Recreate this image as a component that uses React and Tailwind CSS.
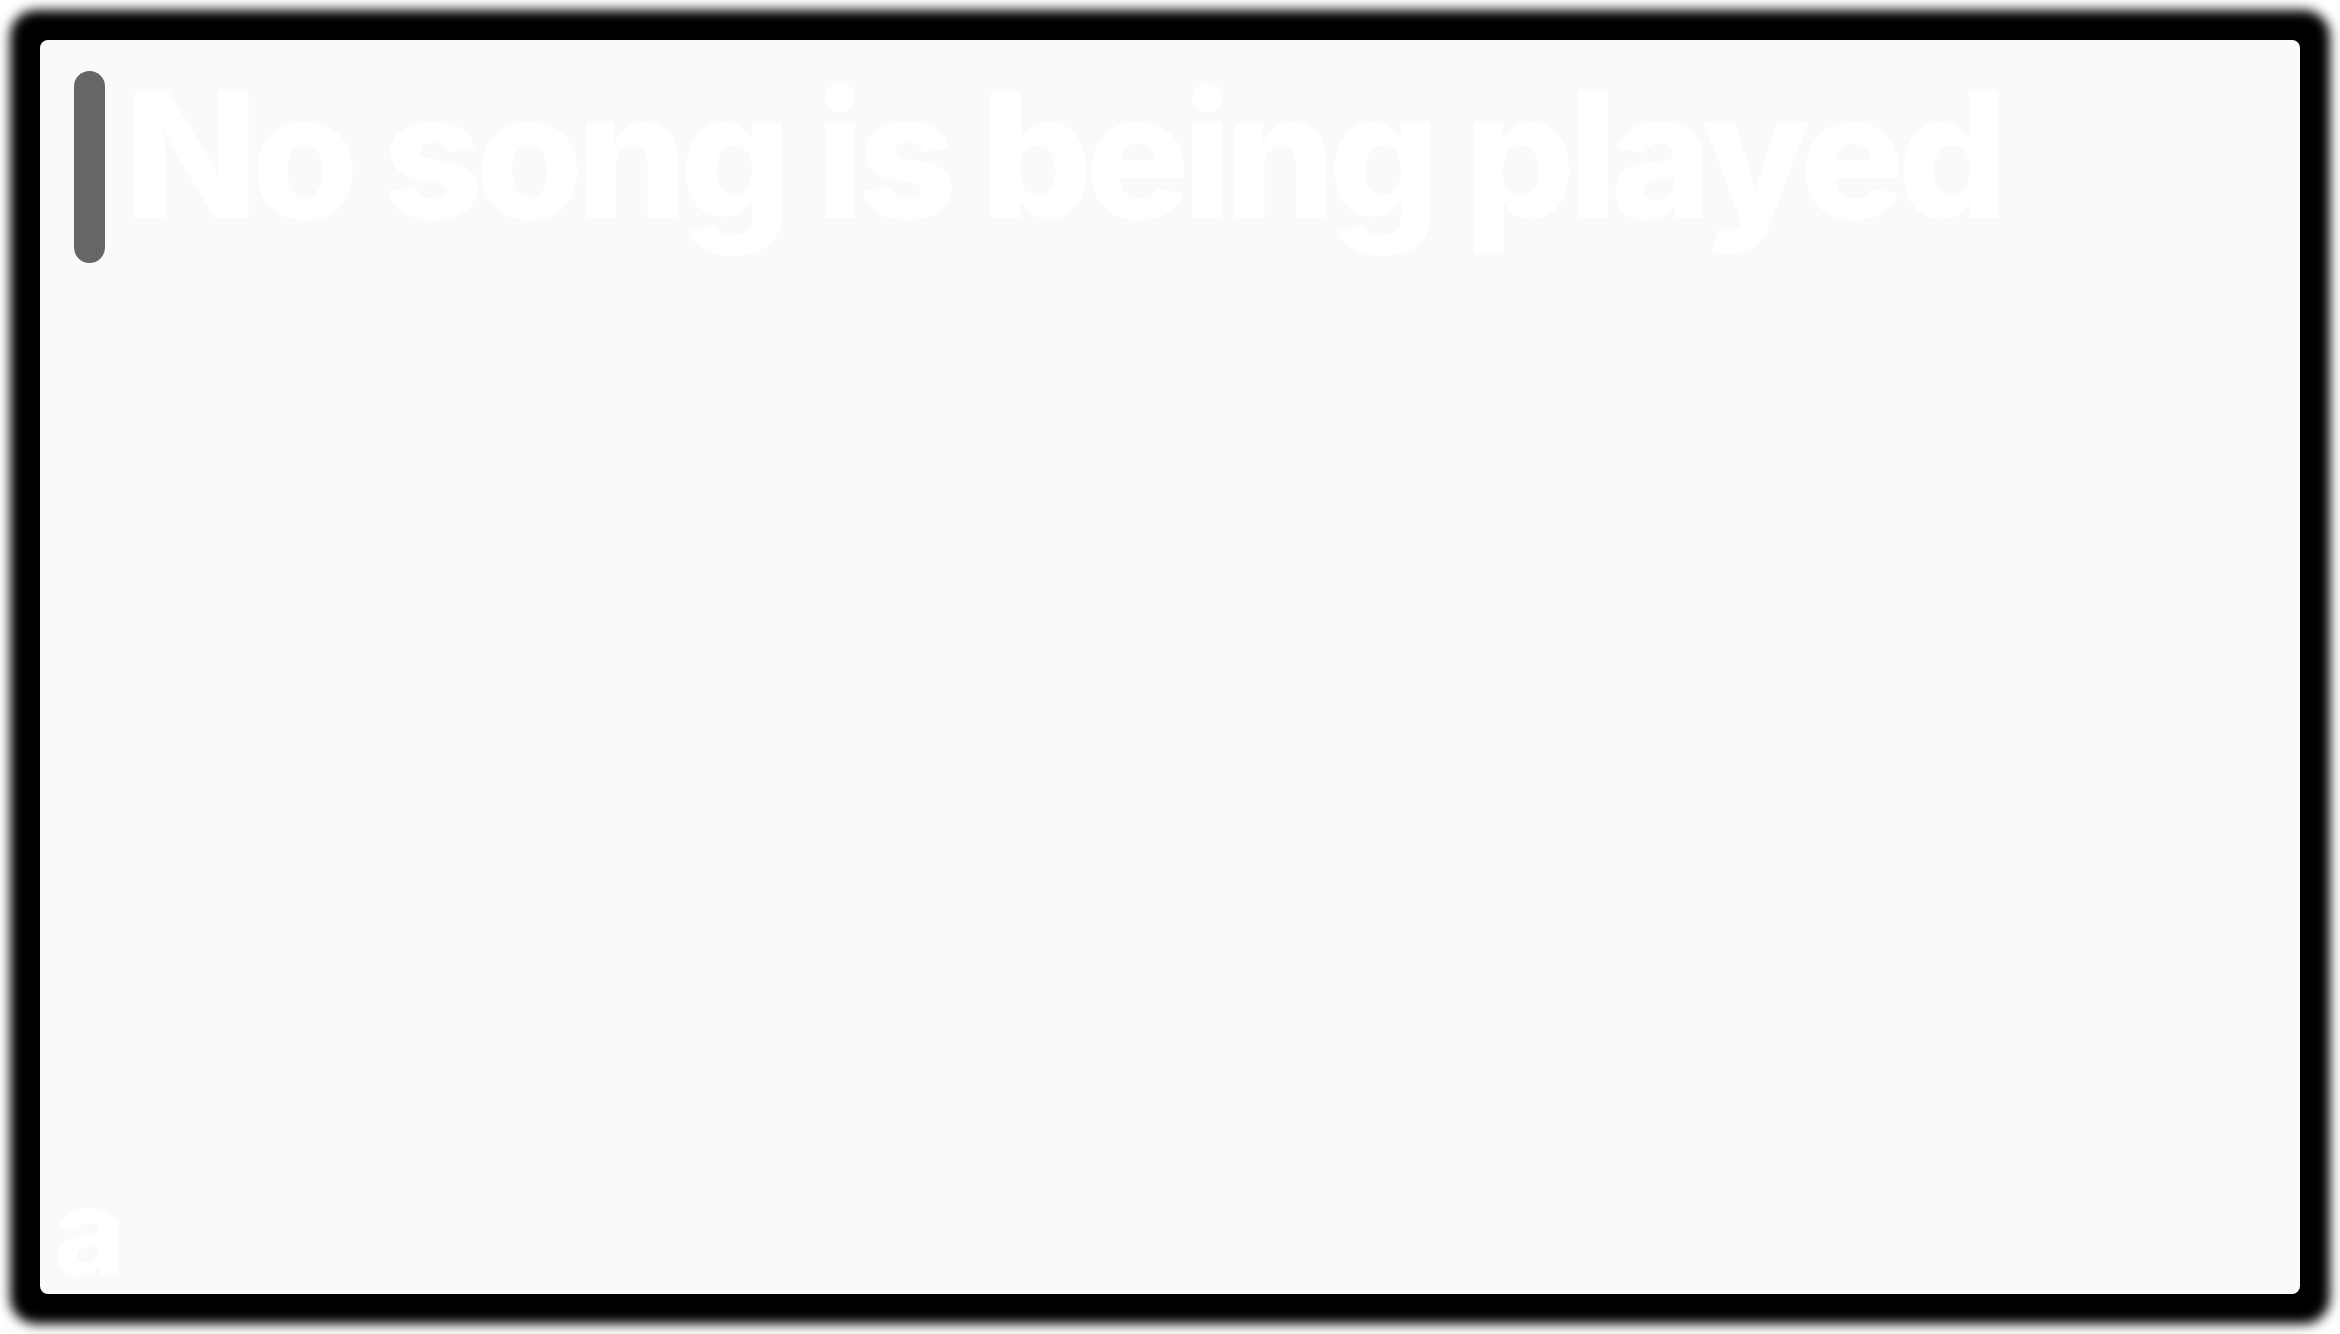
import React from 'react';

const App = () => {
  return (
    <div className="w-full h-screen bg-white p-[40px] overflow-hidden">
      {/* screen panel */}
      <div className="relative h-full rounded-[8px] bg-[#fafafa] shadow-[0_0_12px_30px_#000] flex flex-col pl-[34px] pr-[34px] pt-[31px] pb-[2px] font-['Inter','Liberation_Sans',sans-serif]">
        <div className="flex items-start gap-[20px]">
          <div className="w-[31px] h-[192px] rounded-full bg-[#666666] shrink-0" />
          <h1 className="text-[174px] leading-none font-extrabold tracking-[-7px] text-white whitespace-nowrap -mt-[3px]">
            No song is being played
          </h1>
        </div>
        <div className="mt-auto -ml-[20px] text-[122px] leading-none font-extrabold text-white">a</div>
      </div>
    </div>
  );
};

export default App;
